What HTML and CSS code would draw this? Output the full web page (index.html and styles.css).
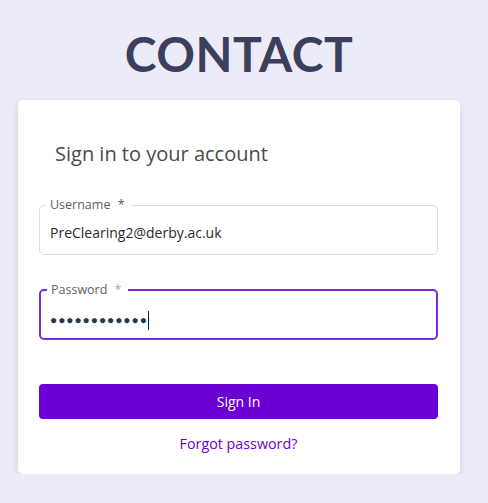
FILE: index.html
```html
<!DOCTYPE html>
<html>
<head>
<meta charset="utf-8">
<link rel="stylesheet" href="styles.css">
</head>
<body>
<div class="page">
  <h1 class="brand">CONTACT</h1>
  <div class="card">
    <h2 class="card-title">Sign in to your account</h2>
    <fieldset class="field">
      <legend class="field-label">Username <span class="req">*</span></legend>
      <div class="field-value">PreClearing2@derby.ac.uk</div>
    </fieldset>
    <fieldset class="field field-focus">
      <legend class="field-label">Password <span class="req req-light">*</span></legend>
      <div class="field-value dots">●●●●●●●●●●●●<span class="caret"></span></div>
    </fieldset>
    <button class="btn">Sign In</button>
    <a class="forgot" href="#">Forgot password?</a>
  </div>
</div>
</body>
</html>
```
FILE: styles.css
```css
html, body {
  margin: 0;
  padding: 0;
  background: #ececf8;
  font-family: "Open Sans", sans-serif;
}
.page {
  width: 442px;
  padding-left: 18px;
  display: flex;
  flex-direction: column;
}
.brand {
  margin: 24px 0 0 0;
  height: 76px;
  font-family: Lato, sans-serif;
  font-weight: 700;
  font-size: 48px;
  line-height: 60px;
  color: #3c3f5b;
  text-align: center;
  letter-spacing: 0.5px;
}
.card {
  background: #fff;
  border-radius: 5px;
  box-shadow: 0 2px 6px rgba(60, 60, 100, 0.18);
  padding: 38px 22px 19px 21px;
  display: flex;
  flex-direction: column;
}
.card-title {
  margin: 0 0 0 16px;
  font-size: 20px;
  font-weight: 400;
  line-height: 32px;
  color: #4a4a4a;
}
.field {
  margin: 28px 0 0 0;
  border: 1px solid #dcdcdc;
  border-radius: 5px;
  padding: 0 10px 11px 10px;
}
.field-focus {
  margin-top: 28px;
  border: 2px solid #7a2ad8;
  padding: 0 9px 8px 9px;
}
.field-label {
  font-size: 12.5px;
  color: #5f5f5f;
  margin-left: -4px;
  padding: 0 7px 0 4px;
  line-height: 14px;
}
.field-focus .field-label {
  margin-left: -3px;
}
.req {
  margin-left: 4px;
  color: #555;
}
.req-light {
  color: #aaa;
}
.field-value {
  font-size: 14px;
  color: #2a2a2a;
  line-height: 20px;
  margin-top: 11px;
}
.dots {
  margin-top: 13px;
  font-size: 12px;
  letter-spacing: 0.9px;
  color: #2b3550;
  display: flex;
  align-items: center;
  height: 20px;
}
.caret {
  display: inline-block;
  width: 1px;
  height: 19px;
  background: #222;
  margin-left: 0;
}
.btn {
  margin-top: 44px;
  height: 35px;
  border: none;
  border-radius: 4px;
  background: #6a00d1;
  color: #fff;
  font-family: "Open Sans", sans-serif;
  font-size: 14px;
}
.forgot {
  margin-top: 14px;
  text-align: center;
  color: #6a00d1;
  font-size: 14.3px;
  line-height: 22px;
  text-decoration: none;
}
```
